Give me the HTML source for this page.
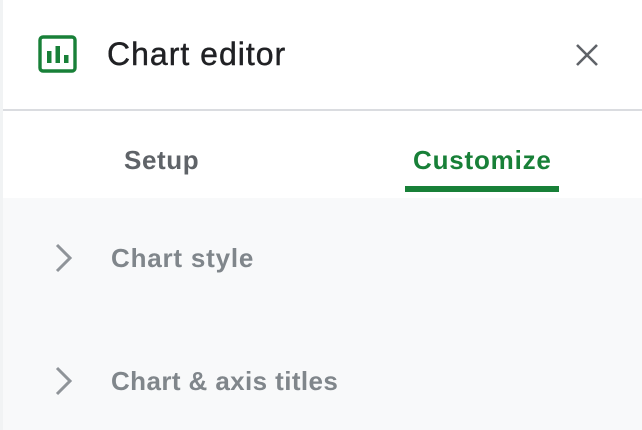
<!DOCTYPE html>
<html><head><style>
body{margin:0;width:642px;height:430px;overflow:hidden;background:#fff;font-family:"Liberation Sans",sans-serif;position:relative}
.a{position:absolute}
</style></head><body>
<div class="a" style="left:0;top:0;width:3px;height:430px;background:#f1f3f4"></div>
<svg class="a" style="left:38px;top:35px" width="40" height="38" viewBox="0 0 40 38">
<rect x="2" y="2" width="35" height="34" rx="3" fill="none" stroke="#188038" stroke-width="3.4"/>
<rect x="9" y="16" width="4.5" height="12" fill="#188038"/>
<rect x="17.5" y="11" width="4.5" height="17" fill="#188038"/>
<rect x="26" y="20" width="4.5" height="8" fill="#188038"/>
</svg>
<div class="a" style="left:107px;top:36px;font-size:32px;color:#202124;letter-spacing:1px;-webkit-text-stroke:0.4px #202124">Chart editor</div>
<svg class="a" style="left:575px;top:43px" width="24" height="24" viewBox="0 0 24 24"><path d="M2 2L22 22M22 2L2 22" stroke="#5f6368" stroke-width="2.6"/></svg>
<div class="a" style="left:3px;top:109px;width:639px;height:2px;background:#dadce0"></div>
<div class="a" style="left:124px;top:145px;font-size:26px;font-weight:bold;color:#5f6368;letter-spacing:0.6px">Setup</div>
<div class="a" style="left:413px;top:145px;font-size:26px;font-weight:bold;color:#188038;letter-spacing:0.8px">Customize</div>
<div class="a" style="left:405px;top:186px;width:154px;height:6px;background:#188038"></div>
<div class="a" style="left:3px;top:198px;width:639px;height:232px;background:#f8f9fa"></div>
<svg class="a" style="left:52px;top:242px" width="24" height="32" viewBox="0 0 24 32"><path d="M5 3L18 16L5 29" fill="none" stroke="#8f9499" stroke-width="3"/></svg>
<div class="a" style="left:111px;top:243px;font-size:26px;font-weight:bold;color:#80868b;letter-spacing:0.8px">Chart style</div>
<svg class="a" style="left:52px;top:365px" width="24" height="32" viewBox="0 0 24 32"><path d="M5 3L18 16L5 29" fill="none" stroke="#8f9499" stroke-width="3"/></svg>
<div class="a" style="left:111px;top:366px;font-size:26px;font-weight:bold;color:#80868b;letter-spacing:0.4px">Chart &amp; axis titles</div>
</body></html>
